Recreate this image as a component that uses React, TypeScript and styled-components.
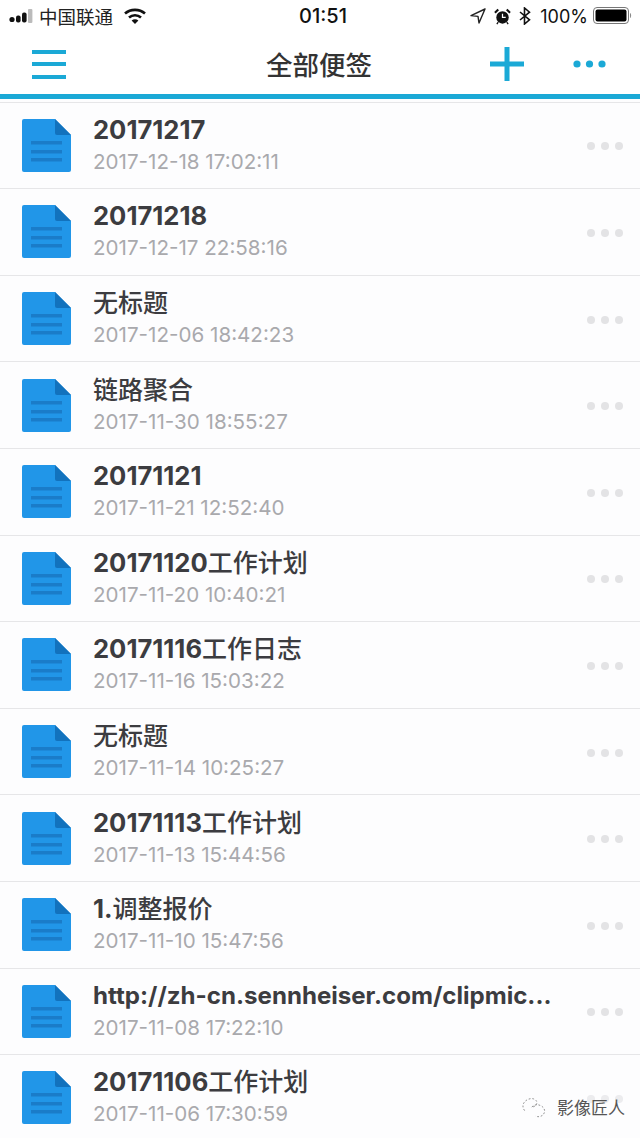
import React from "react";
import styled, { createGlobalStyle } from "styled-components";

const GlobalStyle = createGlobalStyle`
  html, body { margin: 0; padding: 0; background: #fdfdfe; }
  body { font-family: "Liberation Sans", "Noto Sans CJK SC", sans-serif; }
`;

const Page = styled.div`
  width: 640px;
  height: 1138px;
  overflow: hidden;
  position: relative;
  background: #fdfdfe;
`;

const StatusBar = styled.div`
  height: 34px;
  display: grid;
  grid-template-columns: 1fr auto 1fr;
  align-items: center;
  padding: 0 7px 2px 9px;
  box-sizing: border-box;
  color: #111;
  background: #fff;
`;

const StatusLeft = styled.div`
  display: flex;
  align-items: center;
`;

const StatusRight = styled.div`
  display: flex;
  align-items: center;
  justify-content: flex-end;
`;

const StatusIcons = styled.div`
  display: flex;
  align-items: center;
  gap: 8px;
`;

const Carrier = styled.span`
  font-size: 18.5px;
  margin: 0 10px 0 6px;
  color: #222;
`;

const Clock = styled.span`
  font-family: "Inter", "Liberation Sans", sans-serif;
  font-size: 20px;
  font-weight: 500;
  margin-left: 4px;
`;

const Percent = styled.span`
  font-family: "Inter", "Liberation Sans", sans-serif;
  font-size: 18px;
  margin: 0 5px 0 9px;
`;

const NavBar = styled.div`
  height: 60px;
  padding: 0 34px 0 32px;
  display: grid;
  grid-template-columns: 1fr auto 1fr;
  align-items: center;
  background: #fff;
  border-bottom: 5px solid #1ba9d6;
`;

const NavTitle = styled.h1`
  margin: 0 0 2px;
  font-size: 26.5px;
  font-weight: 500;
  color: #333;
`;

const NavActions = styled.div`
  display: flex;
  align-items: center;
  justify-content: flex-end;
  gap: 49px;
`;

const Hamburger = styled.div`
  width: 34px;
  display: flex;
  flex-direction: column;
  gap: 8.5px;
`;

const Bar = styled.span`
  height: 4px;
  background: #1ba9d6;
`;

const List = styled.div`
  margin-top: 2.6px;
  border-top: 1px solid #e6e6e8;
`;

const Row = styled.div`
  height: 86.6px;
  box-sizing: border-box;
  display: flex;
  align-items: center;
  padding: 0 17px 0 22px;
  border-bottom: 1px solid #e6e6e8;
`;

const Body = styled.div`
  flex: 1;
  min-width: 0;
  margin-left: 22px;
`;

const Title = styled.div`
  font-size: 25px;
  line-height: 32px;
  font-weight: 500;
  color: #3c3c40;
  white-space: nowrap;
  margin-top: -1px;
`;

const Latin = styled.span<{ $digits: boolean }>`
  font-family: "Inter", "Liberation Sans", sans-serif;
  font-size: ${(p) => (p.$digits ? "25.6px" : "24.1px")};
  font-weight: 700;
`;

const Stamp = styled.div`
  font-family: "Inter", "Liberation Sans", sans-serif;
  font-size: 20.6px;
  line-height: 28px;
  margin-top: 2px;
  color: #a9a9ad;
`;

const Dots = styled.div`
  display: flex;
  gap: 6px;
  margin-top: 2px;
`;

const Dot = styled.span`
  width: 8px;
  height: 8px;
  border-radius: 50%;
  background: #e3e3e5;
`;

const Watermark = styled.div`
  position: absolute;
  right: 15px;
  bottom: 19px;
  display: flex;
  align-items: center;
  gap: 9px;
  font-size: 17px;
  color: #555;
  background: rgba(253, 253, 254, 0.35);
`;

const SignalIcon = () => (
  <svg width="24" height="16" viewBox="0 0 24 16">
    <circle cx="3" cy="11.5" r="2.6" fill="#111" />
    <rect x="7" y="7.5" width="4.6" height="7" rx="2" fill="#111" />
    <rect x="13" y="4.5" width="4.6" height="10" rx="2" fill="#111" />
    <rect x="19" y="1" width="4.4" height="14" rx="1" fill="#bbb" />
  </svg>
);

const WifiIcon = () => (
  <svg width="24" height="16" viewBox="0 0 24 16" fill="none" stroke="#111" strokeWidth="2.6">
    <path d="M2 5.5 C7.5 .6 16.5 .6 22 5.5" />
    <path d="M6 9.5 C9.5 6.4 14.5 6.4 18 9.5" />
    <path d="M12 16 L8.6 12.4 C10.6 10.8 13.4 10.8 15.4 12.4 Z" fill="#111" stroke="none" />
  </svg>
);

const LocationIcon = () => (
  <svg width="16" height="16" viewBox="0 0 16 16" fill="none" stroke="#222" strokeWidth="1.4">
    <path d="M15 1 L1 7.6 L8 8.4 L9 15 Z" strokeLinejoin="round" />
  </svg>
);

const AlarmIcon = () => (
  <svg width="17" height="17" viewBox="0 0 18 18">
    <circle cx="9" cy="10" r="6.6" fill="#111" />
    <path d="M9 6 V10 H12.4" fill="none" stroke="#fff" strokeWidth="1.3" />
    <path d="M1 5 L4.5 1.5 M17 5 L13.5 1.5" stroke="#111" strokeWidth="2.2" />
    <path d="M4.5 15 L3 17 M13.5 15 L15 17" stroke="#111" strokeWidth="1.4" />
  </svg>
);

const BluetoothIcon = () => (
  <svg width="12" height="18" viewBox="0 0 12 18" fill="none" stroke="#111" strokeWidth="1.6">
    <path d="M1 5 L10.5 12.8 L5.5 17 V1 L10.5 5.2 L1 13" />
  </svg>
);

const BatteryIcon = () => (
  <svg width="40" height="18" viewBox="0 0 40 18">
    <rect x=".5" y=".5" width="35" height="16" rx="3.5" fill="none" stroke="#777" />
    <rect x="2.5" y="2.5" width="31" height="12" rx="2" fill="#000" />
    <path d="M37 6 C38.5 6.5 38.5 10.5 37 11 Z" fill="#888" />
  </svg>
);

const PlusIcon = () => (
  <svg width="34" height="34" viewBox="0 0 34 34">
    <rect x="0" y="14.5" width="34" height="5" fill="#1ba9d6" />
    <rect x="14.5" y="0" width="5" height="34" fill="#1ba9d6" />
  </svg>
);

const MoreIcon = () => (
  <svg width="33" height="8" viewBox="0 0 33 8">
    <circle cx="4" cy="4" r="3.6" fill="#1ba9d6" />
    <circle cx="16.5" cy="4" r="3.6" fill="#1ba9d6" />
    <circle cx="29" cy="4" r="3.6" fill="#1ba9d6" />
  </svg>
);

const NoteIcon = () => (
  <svg width="49" height="53" viewBox="0 0 49 53">
    <path d="M2 0 H33 L49 16 V51 a2 2 0 0 1 -2 2 H2 a2 2 0 0 1 -2 -2 V2 a2 2 0 0 1 2 -2 Z" fill="#2196e8" />
    <path d="M33 0 L49 16 H35 a2 2 0 0 1 -2 -2 Z" fill="#1272bd" />
    <rect x="9" y="22" width="31" height="3.5" fill="#1a7cc9" />
    <rect x="9" y="31" width="31" height="3.5" fill="#1a7cc9" />
    <rect x="9" y="39" width="31" height="3.5" fill="#1a7cc9" />
  </svg>
);

const WechatMark = () => (
  <svg width="27" height="22" viewBox="0 0 30 24" fill="none" stroke="#888" strokeWidth="1" strokeDasharray="2 2">
    <path d="M4 16 C-2 8 8 1 14 3 C20 5 18 12 12 12" />
    <path d="M12 12 C18 6 28 12 26 18 C25 22 20 24 16 22" />
  </svg>
);

type Note = { title: string; stamp: string };

const notes: Note[] = [
  { title: "20171217", stamp: "2017-12-18 17:02:11" },
  { title: "20171218", stamp: "2017-12-17 22:58:16" },
  { title: "无标题", stamp: "2017-12-06 18:42:23" },
  { title: "链路聚合", stamp: "2017-11-30 18:55:27" },
  { title: "20171121", stamp: "2017-11-21 12:52:40" },
  { title: "20171120工作计划", stamp: "2017-11-20 10:40:21" },
  { title: "20171116工作日志", stamp: "2017-11-16 15:03:22" },
  { title: "无标题", stamp: "2017-11-14 10:25:27" },
  { title: "20171113工作计划", stamp: "2017-11-13 15:44:56" },
  { title: "1.调整报价", stamp: "2017-11-10 15:47:56" },
  { title: "http://zh-cn.sennheiser.com/clipmic...", stamp: "2017-11-08 17:22:10" },
  { title: "20171106工作计划", stamp: "2017-11-06 17:30:59" },
];

// latin runs are bold, the chinese part stays lighter
const renderTitle = (title: string) =>
  title.split(/([\x00-\x7f]+)/).map((part, i) =>
    /^[\x00-\x7f]+$/.test(part) ? (
      <Latin key={i} $digits={/^[\d.]+$/.test(part)}>
        {part}
      </Latin>
    ) : (
      part
    )
  );

export default function App() {
  return (
    <Page>
      <GlobalStyle />
      <StatusBar>
        <StatusLeft>
          <SignalIcon />
          <Carrier>中国联通</Carrier>
          <WifiIcon />
        </StatusLeft>
        <Clock>01:51</Clock>
        <StatusRight>
          <StatusIcons>
            <LocationIcon />
            <AlarmIcon />
            <BluetoothIcon />
          </StatusIcons>
          <Percent>100%</Percent>
          <BatteryIcon />
        </StatusRight>
      </StatusBar>
      <NavBar>
        <Hamburger>
          <Bar />
          <Bar />
          <Bar />
        </Hamburger>
        <NavTitle>全部便签</NavTitle>
        <NavActions>
          <PlusIcon />
          <MoreIcon />
        </NavActions>
      </NavBar>
      <List>
        {notes.map((note, i) => (
          <Row key={i}>
            <NoteIcon />
            <Body>
              <Title>{renderTitle(note.title)}</Title>
              <Stamp>{note.stamp}</Stamp>
            </Body>
            <Dots>
              <Dot />
              <Dot />
              <Dot />
            </Dots>
          </Row>
        ))}
      </List>
      <Watermark>
        <WechatMark />
        影像匠人
      </Watermark>
    </Page>
  );
}
